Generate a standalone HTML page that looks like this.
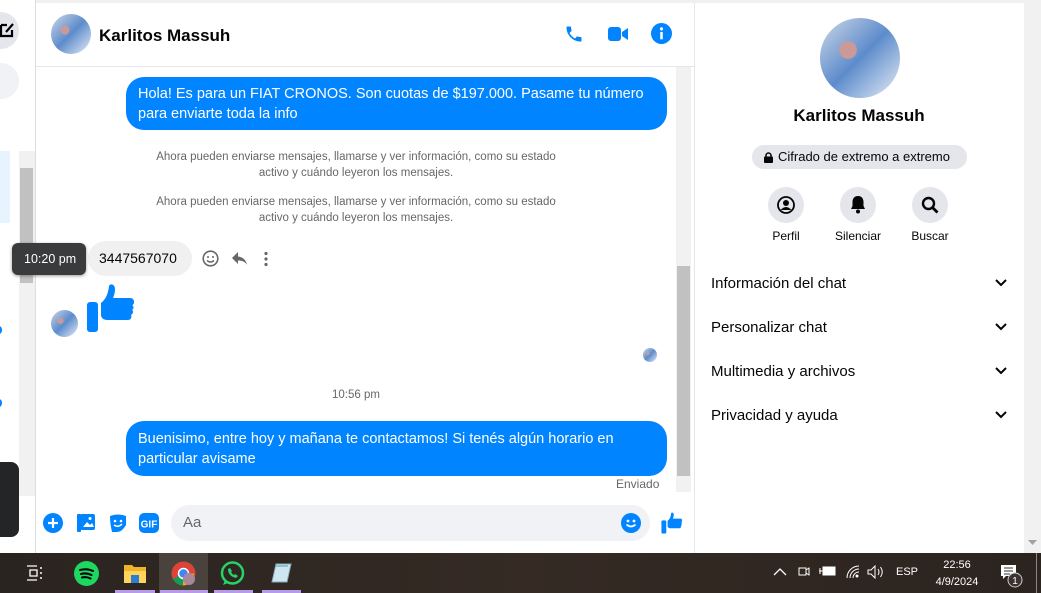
<!DOCTYPE html><html><head><meta charset="utf-8"><style>
*{box-sizing:border-box;margin:0;padding:0}
body{width:1041px;height:593px;overflow:hidden;font-family:"Liberation Sans",sans-serif;background:#fff;position:relative}
.a{position:absolute}
.av{border-radius:50%;background:radial-gradient(circle at 35% 40%,#c99 0 12%,transparent 13%),linear-gradient(135deg,#cfd8e6,#5d8ccc 50%,#e8eef5)}
.bub{background:#0084ff;color:#fff;font-size:14.5px;line-height:20px;border-radius:18px;padding:7px 12px;white-space:nowrap}
.sys{color:#65676b;font-size:11.5px;line-height:16px;text-align:center;width:440px}
.row{position:absolute;left:711px;width:300px;font-size:15px;color:#050505}
.row svg{position:absolute;right:4px;top:4px}
.ic{position:absolute;width:36px;height:36px;border-radius:50%;background:#e4e6eb}
.lbl{position:absolute;font-size:12px;color:#050505;text-align:center;width:70px}
</style></head><body>
<div class="a" style="left:0;top:0;width:36px;height:553px;background:#fff;border-right:1px solid #ddd"></div>
<div class="a" style="left:-18px;top:12px;width:37px;height:37px;border-radius:50%;background:#e4e6eb"></div>
<svg class="a" style="left:0;top:21px" width="14" height="18"><path d="M1 4h6M1 4v11h11V9M6 11l7-8" stroke="#000" stroke-width="2.2" fill="none"/></svg>
<div class="a" style="left:-20px;top:63px;width:39px;height:36px;border-radius:18px;background:#f0f2f5"></div>
<div class="a" style="left:0;top:151px;width:10px;height:72px;background:#e7f3ff"></div>
<div class="a" style="left:19px;top:151px;width:16px;height:345px;background:#f1f1f1"></div>
<div class="a" style="left:20px;top:168px;width:13px;height:115px;background:#c1c1c1"></div>
<div class="a" style="left:-4px;top:326px;width:6px;height:8px;border-radius:50%;background:#0084ff"></div>
<div class="a" style="left:-4px;top:399px;width:6px;height:8px;border-radius:50%;background:#0084ff"></div>
<div class="a" style="left:0;top:462px;width:19px;height:75px;border-radius:0 8px 8px 0;background:#242526"></div>
<div class="a" style="left:36px;top:0;width:988px;height:3px;background:#f0f0f0"></div>
<div class="a av" style="left:51px;top:14px;width:40px;height:40px"></div>
<div class="a" style="left:99px;top:26px;font-size:17px;font-weight:600;color:#050505">Karlitos Massuh</div>
<svg class="a" style="left:564px;top:24px" width="20" height="20" viewBox="0 0 24 24"><path fill="#0084ff" d="M6.6 10.8c1.4 2.8 3.8 5.1 6.6 6.6l2.2-2.2c.3-.3.7-.4 1-.2 1.1.4 2.3.6 3.6.6.6 0 1 .4 1 1V20c0 .6-.4 1-1 1C10.6 21 3 13.4 3 4c0-.6.4-1 1-1h3.5c.6 0 1 .4 1 1 0 1.3.2 2.5.6 3.6.1.3 0 .7-.2 1z"/></svg>
<svg class="a" style="left:607px;top:25px" width="22" height="18" viewBox="0 0 22 18"><rect x="1" y="2" width="13" height="14" rx="3" fill="#0084ff"/><path d="M15 7l6-4v12l-6-4z" fill="#0084ff"/></svg>
<svg class="a" style="left:651px;top:23px" width="21" height="21" viewBox="0 0 20 20"><circle cx="10" cy="10" r="10" fill="#0084ff"/><rect x="8.8" y="8.5" width="2.4" height="7" fill="#fff"/><circle cx="10" cy="5.6" r="1.5" fill="#fff"/></svg>
<div class="a" style="left:36px;top:66px;width:658px;height:1px;background:#e4e6eb"></div>
<div class="a" style="left:694px;top:3px;width:1px;height:550px;background:#e4e6eb"></div>
<div class="a bub" style="left:126px;top:77px;width:541px;height:53px">Hola! Es para un FIAT CRONOS. Son cuotas de $197.000. Pasame tu número<br>para enviarte toda la info</div>
<div class="a sys" style="left:136px;top:149px">Ahora pueden enviarse mensajes, llamarse y ver información, como su estado<br>activo y cuándo leyeron los mensajes.</div>
<div class="a sys" style="left:136px;top:194px">Ahora pueden enviarse mensajes, llamarse y ver información, como su estado<br>activo y cuándo leyeron los mensajes.</div>
<div class="a" style="left:88px;top:241px;width:104px;height:35px;border-radius:18px;background:#f0f0f0;font-size:14px;color:#050505;padding:9px 0 0 11px">3447567070</div>
<div class="a" style="left:12px;top:243px;width:74px;height:32px;border-radius:6px;background:#3a3b3c;color:#fff;font-size:12.5px;padding:9px 0 0 12px;box-shadow:0 1px 3px rgba(0,0,0,.4)">10:20 pm</div>
<svg class="a" style="left:202px;top:250px" width="17" height="17"><circle cx="8.5" cy="8.5" r="7.3" stroke="#65676b" stroke-width="1.6" fill="none"/><circle cx="6" cy="7" r="1" fill="#65676b"/><circle cx="11" cy="7" r="1" fill="#65676b"/><path d="M5 10.5q3.5 3 7 0" stroke="#65676b" stroke-width="1.5" fill="none"/></svg>
<svg class="a" style="left:231px;top:251px" width="17" height="15"><path d="M7 1L1 7l6 6V9.5c4 0 7 1 9 4.5-1-5-4-8-9-8.5z" fill="#65676b"/></svg>
<svg class="a" style="left:263px;top:251px" width="6" height="16"><circle cx="3" cy="2.5" r="1.6" fill="#65676b"/><circle cx="3" cy="8" r="1.6" fill="#65676b"/><circle cx="3" cy="13.5" r="1.6" fill="#65676b"/></svg>
<div class="a av" style="left:51px;top:310px;width:27px;height:27px"></div>
<svg class="a" style="left:86px;top:283px" width="50" height="50" viewBox="0 0 50 50"><rect x="1" y="19" width="11" height="30" rx="3" fill="#0084ff"/><path d="M15 20c5-4 7-9 8-17 1-3 6-2 6 3 0 5-2 9-2 9h17c3 0 4 2 4 4 0 2-1 3-2 3 2 1 2 4 0 5 2 1 1 4-1 5 1 2 0 5-3 5H21c-3 0-6-2-6-5z" fill="#0084ff"/></svg>
<div class="a av" style="left:643px;top:348px;width:14px;height:14px"></div>
<div class="a" style="left:332px;top:389px;font-size:11.5px;color:#65676b">10:56 pm</div>
<div class="a bub" style="left:126px;top:421px;width:541px;height:55px;padding-top:8px">Buenisimo, entre hoy y mañana te contactamos! Si tenés algún horario en<br>particular avisame</div>
<div class="a" style="left:616px;top:477px;font-size:12px;color:#65676b">Enviado</div>
<div class="a" style="left:676px;top:67px;width:15px;height:425px;background:#f1f1f1"></div>
<div class="a" style="left:677px;top:266px;width:13px;height:210px;background:#c1c1c1"></div>
<svg class="a" style="left:43px;top:513px" width="20" height="20"><circle cx="10" cy="10" r="10" fill="#0084ff"/><path d="M10 5v10M5 10h10" stroke="#fff" stroke-width="2.2"/></svg>
<svg class="a" style="left:76px;top:513px" width="20" height="20" viewBox="0 0 20 20"><rect x="1" y="1" width="4" height="18" rx="1" fill="#0084ff"/><rect x="4" y="1" width="15" height="16" rx="2" fill="#0084ff"/><path d="M7 14l4-5 3 3 2-2 2 4z" fill="#fff"/><circle cx="14" cy="5.5" r="1.5" fill="#fff"/></svg>
<svg class="a" style="left:108px;top:513px" width="20" height="20" viewBox="0 0 20 20"><path d="M2 3q8-3 16 0v9q-4 7-9 7H4q-2-8-2-16z" fill="#0084ff"/><circle cx="7" cy="8" r="1.3" fill="#fff"/><circle cx="13" cy="8" r="1.3" fill="#fff"/><path d="M6 12q4 3 8-1" stroke="#fff" stroke-width="1.5" fill="none"/></svg>
<svg class="a" style="left:139px;top:513px" width="20" height="20"><rect width="20" height="20" rx="5" fill="#0084ff"/><text x="10" y="14.5" font-family="Liberation Sans" font-weight="bold" font-size="10" fill="#fff" text-anchor="middle">GIF</text></svg>
<div class="a" style="left:171px;top:505px;width:479px;height:36px;border-radius:18px;background:#f0f2f5;font-size:15px;color:#65676b;padding:9px 0 0 12px">Aa</div>
<svg class="a" style="left:621px;top:513px" width="20" height="20"><circle cx="10" cy="10" r="10" fill="#0084ff"/><circle cx="7" cy="8" r="1.4" fill="#fff"/><circle cx="13" cy="8" r="1.4" fill="#fff"/><path d="M5.5 11.5q4.5 4 9 0" stroke="#fff" stroke-width="1.7" fill="none"/></svg>
<svg class="a" style="left:661px;top:512px" width="22" height="22" viewBox="0 0 50 50"><rect x="1" y="19" width="11" height="30" rx="3" fill="#0084ff"/><path d="M15 20c5-4 7-9 8-17 1-3 6-2 6 3 0 5-2 9-2 9h17c3 0 4 2 4 4 0 2-1 3-2 3 2 1 2 4 0 5 2 1 1 4-1 5 1 2 0 5-3 5H21c-3 0-6-2-6-5z" fill="#0084ff"/></svg>
<div class="a av" style="left:820px;top:18px;width:80px;height:80px"></div>
<div class="a" style="left:695px;top:106px;width:328px;text-align:center;font-size:17px;font-weight:600;color:#050505">Karlitos Massuh</div>
<div class="a" style="left:752px;top:145px;width:215px;height:24px;border-radius:12px;background:#e4e6eb;font-size:13px;color:#050505;padding:4px 0 0 26px">Cifrado de extremo a extremo</div>
<svg class="a" style="left:764px;top:152px" width="9" height="11"><rect x="0" y="4.5" width="9" height="6.5" rx="1" fill="#050505"/><path d="M2 5V3.5a2.5 2.5 0 015 0V5" stroke="#050505" stroke-width="1.5" fill="none"/></svg>
<div class="ic" style="left:768px;top:187px"></div><div class="ic" style="left:840px;top:187px"></div><div class="ic" style="left:912px;top:187px"></div>
<svg class="a" style="left:777px;top:196px" width="18" height="18"><circle cx="9" cy="9" r="8" stroke="#050505" stroke-width="1.8" fill="none"/><circle cx="9" cy="7" r="3" fill="#050505"/><path d="M3.5 14q5.5-6 11 0" fill="#050505"/></svg>
<svg class="a" style="left:849px;top:195px" width="18" height="19"><path d="M9 1c-4 0-5.5 3-5.5 6v4L2 14h14l-1.5-3V7c0-3-1.5-6-5.5-6z" fill="#050505"/><circle cx="9" cy="16.5" r="2" fill="#050505"/></svg>
<svg class="a" style="left:921px;top:196px" width="18" height="18"><circle cx="7.5" cy="7.5" r="5.5" stroke="#050505" stroke-width="2.4" fill="none"/><path d="M11.5 11.5l5 5" stroke="#050505" stroke-width="2.8"/></svg>
<div class="lbl" style="left:751px;top:229px">Perfil</div><div class="lbl" style="left:823px;top:229px">Silenciar</div><div class="lbl" style="left:895px;top:229px">Buscar</div>
<div class="row" style="top:275px">Información del chat<svg width="12" height="8"><path d="M1 1l5 5 5-5" stroke="#050505" stroke-width="2" fill="none"/></svg></div>
<div class="row" style="top:319px">Personalizar chat<svg width="12" height="8"><path d="M1 1l5 5 5-5" stroke="#050505" stroke-width="2" fill="none"/></svg></div>
<div class="row" style="top:363px">Multimedia y archivos<svg width="12" height="8"><path d="M1 1l5 5 5-5" stroke="#050505" stroke-width="2" fill="none"/></svg></div>
<div class="row" style="top:407px">Privacidad y ayuda<svg width="12" height="8"><path d="M1 1l5 5 5-5" stroke="#050505" stroke-width="2" fill="none"/></svg></div>
<div class="a" style="left:1024px;top:0;width:17px;height:553px;background:#f1f1f1"></div>
<svg class="a" style="left:1028px;top:540px" width="9" height="6"><path d="M0 0h9L4.5 5z" fill="#a3a3a3"/></svg>
<div class="a" style="left:0;top:553px;width:1041px;height:40px;background:linear-gradient(90deg,#2a2420,#352a24 50%,#2b241f)"></div>
<svg class="a" style="left:26px;top:564px" width="18" height="18"><path d="M1 2h10M1 16h10M4 6h7v6H4z" stroke="#fff" stroke-width="1.3" fill="none"/><path d="M15 3v2M15 8v2M15 13v2" stroke="#fff" stroke-width="1.5"/></svg>
<svg class="a" style="left:74px;top:561px" width="25" height="25"><circle cx="12.5" cy="12.5" r="12.5" fill="#1ed760"/><path d="M6 9q7-2 13 1M7 13q5.5-1.5 10.5 1M8 16.5q4.5-1 8.5 1" stroke="#000" stroke-width="2" fill="none" stroke-linecap="round"/></svg>
<svg class="a" style="left:123px;top:563px" width="24" height="21"><path d="M1 2h8l2 2h12v16H1z" fill="#f0b429"/><rect x="1" y="8" width="22" height="12" fill="#ffd45c"/><rect x="8" y="12" width="8" height="8" fill="#2a7fd4"/></svg>
<div class="a" style="left:159px;top:553px;width:49px;height:40px;background:#4a423d"></div>
<svg class="a" style="left:171px;top:561px" width="25" height="25"><circle cx="12.5" cy="12.5" r="12" fill="#db4437"/><path d="M12.5 12.5L2 18a12 12 0 0010 6.5z" fill="#0f9d58"/><path d="M12.5 12.5l10.5 0a12 12 0 01-11 12z" fill="#f4b400"/><circle cx="12.5" cy="12.5" r="5" fill="#4285f4" stroke="#fff" stroke-width="1.5"/><circle cx="18" cy="18" r="6" fill="#a8889a"/></svg>
<svg class="a" style="left:220px;top:561px" width="25" height="25"><circle cx="12.5" cy="12" r="10.5" stroke="#25d366" stroke-width="2.5" fill="none"/><path d="M3 24l2-5 3 3z" fill="#25d366"/><path d="M8 8q0 7 8 9l2-2-3-2-1 1q-2-1-3-3l1-1-2-3z" fill="#25d366"/></svg>
<svg class="a" style="left:270px;top:562px" width="24" height="22"><path d="M6 2h15l-4 18H2z" fill="#cfe6f0" stroke="#8ab" stroke-width="1"/><path d="M5 4h13" stroke="#4a9" stroke-width="1"/></svg>
<div class="a" style="left:115px;top:590px;width:40px;height:3px;background:#b89be6"></div>
<div class="a" style="left:160px;top:590px;width:48px;height:3px;background:#b89be6"></div>
<div class="a" style="left:214px;top:590px;width:39px;height:3px;background:#b89be6"></div>
<div class="a" style="left:262px;top:590px;width:39px;height:3px;background:#b89be6"></div>
<svg class="a" style="left:773px;top:567px" width="14" height="9"><path d="M1 8l6-6 6 6" stroke="#fff" stroke-width="1.3" fill="none"/></svg>
<svg class="a" style="left:798px;top:564px" width="12" height="16"><rect x="1" y="4" width="7" height="7" stroke="#fff" fill="none"/><path d="M8 6l3-2v7l-3-2" stroke="#fff" fill="none"/></svg>
<svg class="a" style="left:819px;top:566px" width="18" height="11"><rect x="4" y="1" width="12" height="8" stroke="#fff" fill="#fff" stroke-width="1"/><path d="M0 5h4M1 2v6" stroke="#fff"/></svg>
<svg class="a" style="left:846px;top:565px" width="14" height="14"><path d="M1 13A12 12 0 0113 1M4 13a9 9 0 019-9M7 13a6 6 0 016-6" stroke="#fff" fill="none"/><circle cx="11" cy="11" r="1.5" fill="#fff"/></svg>
<svg class="a" style="left:867px;top:565px" width="17" height="14"><path d="M1 5h3l4-4v12L4 9H1z" stroke="#fff" fill="none"/><path d="M11 4q2 3 0 6M13.5 2q3.5 5 0 10" stroke="#fff" fill="none"/></svg>
<div class="a" style="left:896px;top:566px;font-size:11px;color:#fff">ESP</div>
<div class="a" style="left:932px;top:557px;width:50px;text-align:center;font-size:11px;color:#fff;line-height:17px">22:56<br>4/9/2024</div>
<svg class="a" style="left:999px;top:563px" width="26" height="26"><path d="M2 2h15v11H7l-3 3v-3H2z" fill="#fff"/><path d="M5 5h9M5 8h9M5 11h6" stroke="#333"/><circle cx="16" cy="17" r="7" fill="#3a3330" stroke="#ccc"/><text x="16" y="21" font-size="10" fill="#fff" text-anchor="middle" font-family="Liberation Sans">1</text></svg>
<div class="a" style="left:1036px;top:553px;width:1px;height:40px;background:#888"></div>
</body></html>
